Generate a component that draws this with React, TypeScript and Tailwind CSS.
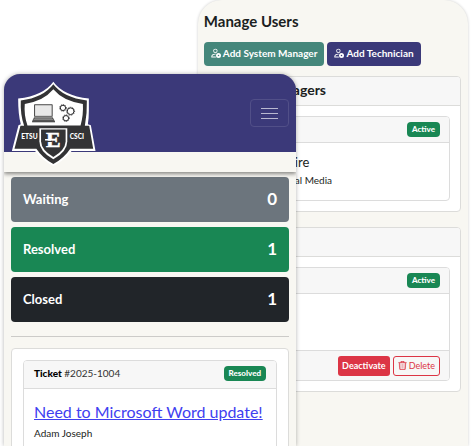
import React from "react";
import type { ReactNode } from "react";

function UserGearIcon() {
  return (
    <svg viewBox="0 0 16 16" className="h-[10px] w-[10px] shrink-0" fill="currentColor" aria-hidden="true">
      <path d="M7 1a3.500 3.500 0 1 0 0 7 3.500 3.500 0 0 0 0-7Zm0 1.300a2.200 2.200 0 1 1 0 4.400 2.200 2.200 0 0 1 0-4.400ZM7 9c-4.500 0-6.500 2.200-6.500 4.500V15h7.500l-.6-1.300H2c.1-1.700 1.600-3.400 5-3.400L8 9H7Z" />
      <path fillRule="evenodd" d="M12 7.800a4 4 0 1 0 0 8 4 4 0 0 0 0-8Zm0 2.800a1.200 1.200 0 1 1 0 2.400 1.200 1.200 0 0 1 0-2.400Z" />
    </svg>
  );
}

function TrashIcon() {
  return (
    <svg viewBox="0 0 16 16" className="h-[9px] w-[9px] shrink-0" fill="currentColor" aria-hidden="true">
      <path d="M6.500 1h3a.5.5 0 0 1 .5.5v1H6v-1a.5.5 0 0 1 .5-.5ZM11 2.500v-1A1.500 1.500 0 0 0 9.500 0h-3A1.500 1.500 0 0 0 5 1.500v1H1.500a.5.5 0 0 0 0 1h.54l.85 10.660A2 2 0 0 0 4.880 16h6.230a2 2 0 0 0 2-1.840l.85-10.660h.54a.5.5 0 0 0 0-1H11Zm1.960 1-.85 10.580a1 1 0 0 1-1 .92H4.880a1 1 0 0 1-1-.92L3.040 3.500h9.920ZM5.500 5v8.500M8 5v8.500M10.500 5v8.500" stroke="currentColor" strokeWidth="0.600" />
    </svg>
  );
}

function Gear({ x, y, r }: { x: number; y: number; r: number }) {
  return (
    <g fill="none" stroke="#2b2b2d">
      <circle cx={x} cy={y} r={r} strokeWidth="3" />
      <circle cx={x} cy={y} r={r + 2} strokeWidth="3" strokeDasharray="3 3.500" />
    </g>
  );
}

function Logo() {
  return (
    <svg viewBox="36 48 252 256" className="h-[85px] w-[84px]" role="img" aria-label="ETSU CSCI">
      <path d="M160 50 Q189 91 267 101 V137 Q267 160 264 178 L273 181 L287 259 H215 Q195 286 160 304 Q125 286 105 259 H35 L55 181 L62 178 Q54 150 54 101 Q131 91 160 50Z" fill="#fff" />
      <path d="M160 58 Q190 98 261 107 Q262 147 255 183 H268 L280 252 H211 Q193 280 160 298 Q127 280 109 252 H43 L61 183 H72 Q60 149 62 107 Q130 98 160 58Z" fill="#333335" />
      <path d="M160 73 Q190 109 249 117 Q251 149 242 182 H82 Q71 149 74 117 Q130 109 160 73Z" fill="#fff" />
      <path d="M118 190 H202 V230 Q202 260 160 284 Q118 260 118 230Z" fill="#fff" />
      <path d="M123 194 H197 V230 Q196 255 160 277 Q124 255 123 230Z" fill="#333335" />
      <rect x="102" y="118" width="56" height="38" rx="2" fill="#444" />
      <rect x="105" y="121" width="50" height="32" fill="#e8e8e8" />
      <path d="M102 157 H158 L165 169 H96Z" fill="#555" />
      <path d="M104 160 H156 M101 164 H159" stroke="#bbb" strokeWidth="1.500" />
      <path d="M96 169 H165 V172 H96Z" fill="#222" />
      <Gear x={189} y={129} r={8} />
      <Gear x={212} y={139} r={10} />
      <Gear x={198} y={160} r={8} />
      <text x="88" y="222" textAnchor="middle" fill="#fff" className="font-['Lato'] text-[20px] font-black">ETSU</text>
      <text x="231" y="222" textAnchor="middle" fill="#fff" className="font-['Lato'] text-[20px] font-black">CSCI</text>
      <text x="160" y="248" textAnchor="middle" fill="#fff" stroke="#fff" strokeWidth="1.500" className="font-['Liberation_Serif'] text-[66px] font-bold">E</text>
      <path d="M135 230 H156" stroke="#333335" strokeWidth="4" />
      <path d="M135 225 H153" stroke="#fff" strokeWidth="4" />
    </svg>
  );
}

function Badge({ children }: { children: ReactNode }) {
  return (
    <span className="flex h-[15px] items-center rounded-[4px] bg-[#198754] px-[5px] pb-px text-[8px] font-black text-white">
      {children}
    </span>
  );
}

const counters = [
  { label: "Waiting", count: 0, tone: "bg-[#6c757d]" },
  { label: "Resolved", count: 1, tone: "bg-[#198754]" },
  { label: "Closed", count: 1, tone: "bg-[#212529]" },
];

function ManageUsers() {
  return (
    <section className="mr-[3px] ml-[42%] min-h-full rounded-t-[24px] bg-[#f8f7f2] pt-[10px] pr-[7px] pl-[6px] shadow-[0_0_3px_rgba(0,0,0,0.2)]">
      <h1 className="text-[15px] leading-[22px] font-bold">Manage Users</h1>
      <div className="mt-[10px] flex gap-[3px] text-[10px] font-bold whitespace-nowrap text-white">
        <button className="flex h-6 items-center gap-[2px] rounded-[4px] bg-[#45877b] px-[7px] pb-[2px]">
          <UserGearIcon />
          Add System Manager
        </button>
        <button className="flex h-6 items-center gap-[2px] rounded-[4px] bg-[#3b3979] px-[7px] pb-[2px]">
          <UserGearIcon />
          Add Technician
        </button>
      </div>
      <div className="mt-[10px] overflow-hidden rounded-[4px] border border-[#dcdcda] bg-white">
        <h2 className="h-[29px] border-b border-[#dcdcda] bg-[#f7f7f7] pl-[88px] text-[14px] leading-[26px] font-bold">agers</h2>
        <div className="m-[10px] overflow-hidden rounded-[4px] border border-[#dcdcdc]">
          <div className="flex h-[26px] items-center justify-end border-b border-[#dcdcdc] bg-[#f7f7f7] px-[9px]">
            <Badge>Active</Badge>
          </div>
          <div className="h-[57px] pt-[10px] pl-[79px]">
            <p className="text-[13px] leading-[18px]">ire</p>
            <p className="text-[10px] leading-[18px]">al Media</p>
          </div>
        </div>
      </div>
      <div className="mt-[15px] overflow-hidden rounded-[4px] border border-[#dcdcda] bg-white">
        <div className="h-[29px] border-b border-[#dcdcda] bg-[#f7f7f7]" />
        <div className="m-[10px] overflow-hidden rounded-[4px] border border-[#dcdcdc]">
          <div className="flex h-[26px] items-center justify-end border-b border-[#dcdcdc] bg-[#f7f7f7] px-[9px]">
            <Badge>Active</Badge>
          </div>
          <div className="h-[56px]" />
          <div className="flex h-[30px] items-center justify-end gap-[3px] border-t border-[#dcdcdc] bg-[#f7f7f7] px-[9px] text-[9px]">
            <button className="h-5 rounded-[3px] bg-[#dc3545] px-1 font-bold text-white">Deactivate</button>
            <button className="flex h-5 items-center gap-[2px] rounded-[3px] border border-[#dc3545] px-1 text-[#dc3545]">
              <TrashIcon />
              Delete
            </button>
          </div>
        </div>
      </div>
    </section>
  );
}

function TicketDashboard() {
  return (
    <section className="absolute top-[74px] bottom-0 left-1 w-[62%] overflow-hidden rounded-t-[16px] bg-[#f8f7f2] shadow-[0_0_4px_rgba(0,0,0,0.3)]">
      <header className="relative h-[98px] border-b-[20px] border-[#f8f7f2] bg-[#3b3979] shadow-[0_2px_4px_rgba(0,0,0,0.45)]">
        <div className="absolute top-[7px] left-2">
          <Logo />
        </div>
        <div className="flex h-full items-center justify-end pr-[7px]">
          <button aria-label="Menu" className="flex h-7 w-[39px] flex-col items-center justify-center gap-1 rounded-[4px] border border-[#514f88]">
            <span className="h-px w-[17px] bg-[#b9b8d0]" />
            <span className="h-px w-[17px] bg-[#b9b8d0]" />
            <span className="h-px w-[17px] bg-[#b9b8d0]" />
          </button>
        </div>
      </header>
      <main className="px-[7px] pt-[5px]">
        <ul className="flex flex-col gap-[5px] font-bold text-white">
          {counters.map((c) => (
            <li key={c.label} className={`flex h-[45px] items-center justify-between rounded-[4px] px-3 ${c.tone}`}>
              <span className="text-[13px]">{c.label}</span>
              <span className="pb-[2px] text-[17px]">{c.count}</span>
            </li>
          ))}
        </ul>
        <hr className="mt-[14px] border-[#cccbc8]" />
        <div className="mt-[11px] rounded-t-[4px] border border-[#dcdcda] bg-white px-[11px] pt-[11px] pb-10">
          <article className="overflow-hidden rounded-[4px] border border-[#dcdcdc]">
            <div className="flex h-[28px] items-center justify-between border-b border-[#dcdcdc] bg-[#f7f7f7] px-[10px] pb-[2px]">
              <p className="text-[10px] text-[#333]"><strong className="font-black text-black">Ticket</strong> #2025-1004</p>
              <Badge>Resolved</Badge>
            </div>
            <div className="px-[10px] pt-[10px] pb-6">
              <a href="#ticket" className="block text-[16px] leading-[25px] whitespace-nowrap text-[#4040f0] underline">
                Need to Microsoft Word update!
              </a>
              <p className="text-[10px] leading-[18px]">Adam Joseph</p>
            </div>
          </article>
        </div>
      </main>
    </section>
  );
}

export default function App() {
  return (
    <div className="relative h-screen overflow-hidden bg-white font-['Lato','Open_Sans',sans-serif] text-[#1b1e21]">
      <ManageUsers />
      <TicketDashboard />
    </div>
  );
}
